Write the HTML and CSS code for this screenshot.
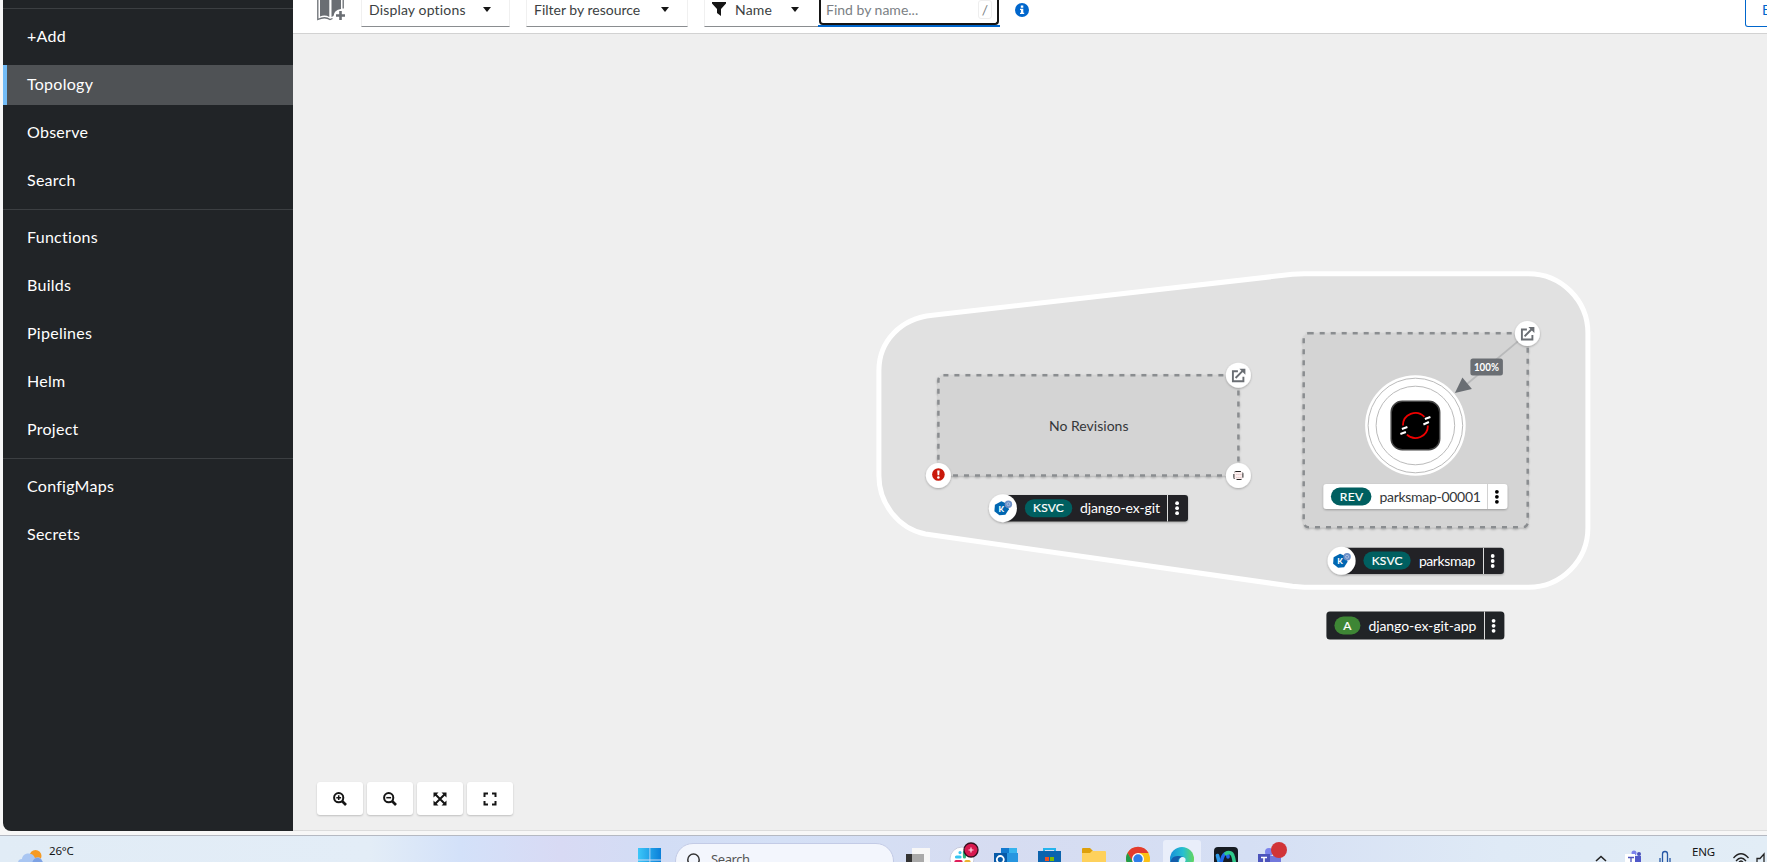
FILE: index.html
```
<!DOCTYPE html>
<html lang="en">
<head>
<meta charset="utf-8">
<title>Topology</title>
<link rel="stylesheet" href="styles.css">
</head>
<body>
<div class="browser">
  <nav class="sidebar">
    <ul class="nav-group"><li class="nav-item">+Add</li><li class="nav-item active">Topology</li><li class="nav-item">Observe</li><li class="nav-item">Search</li></ul>
    <ul class="nav-group"><li class="nav-item">Functions</li><li class="nav-item">Builds</li><li class="nav-item">Pipelines</li><li class="nav-item">Helm</li><li class="nav-item">Project</li></ul>
    <ul class="nav-group"><li class="nav-item">ConfigMaps</li><li class="nav-item">Secrets</li></ul>
  </nav>
  <main class="main">
    <header class="toolbar">
      <svg class="catalog" width="30" height="22" viewBox="0 0 30 22">
        <path fill="#6a6e73" d="M3 0H12.300V17Q8 14.500 3 16.500ZM14.500 0H24V9Q17 10 16.500 16L14.500 17Z"/>
        <path fill="none" stroke="#6a6e73" stroke-width="1.300" d="M.8 0V19.500Q8 16 13 19.500L15.500 18.500M26.200 0V8.500"/>
        <path stroke="#6a6e73" stroke-width="2.600" d="M19 15.500H28M23.500 11V20"/>
      </svg>
      <div class="select display"><span>Display options</span><i class="caret"></i></div>
      <div class="select filter"><span>Filter by resource</span><i class="caret"></i></div>
      <div class="select name"><svg width="14" height="14" viewBox="0 0 14 14"><path d="M0 0H14V1.500L9 7V14L5 11V7L0 1.500Z" fill="#151515"/></svg><span>Name</span><i class="caret"></i></div>
      <div class="search"><div class="search-box"><span>Find by name...</span><kbd>/</kbd></div></div>
      <svg class="info" width="14" height="14" viewBox="0 0 14 14"><circle cx="7" cy="7" r="7" fill="#06c"/><path fill="#fff" d="M5.800 2.500H8.300V4.700H5.800ZM5 5.700H8.300V9.700H9.200V11H5V9.700H5.900V7H5Z"/></svg>
      <div class="export">E</div>
    </header>
    <section class="canvas">
      <svg class="graph" width="1474" height="797" viewBox="292.6 33.5 1474 797">
        <defs>
          <filter id="sh" x="-30%" y="-30%" width="160%" height="160%"><feDropShadow dx="0" dy="1" stdDeviation="1.200" flood-color="#000" flood-opacity=".28"/></filter>
          <g id="open"><circle r="12.500" fill="#fff" filter="url(#sh)"/><path d="M-.5-4H-5.500V6H5V1.500M-2.800 2.800L5-5" fill="none" stroke="#6a6e73" stroke-width="1.900"/><path d="M1-6.500H7V-.5Z" fill="#6a6e73"/></g>
          <g id="dots"><circle cy="-5" r="1.900"/><circle r="1.900"/><circle cy="5" r="1.900"/></g>
          <g id="knative"><circle r="14" fill="#fff" filter="url(#sh)"/><path d="M-1.500-7L4-4.500 6 1 2.500 6.500-3.500 7-8.500 3-8-3.500Z" fill="#0066b1"/><circle cx="5.500" cy="-4" r="3.700" fill="#6c8fc7"/><circle cx="5.500" cy="-4" r="1.500" fill="none" stroke="#b9c9e6" stroke-width=".8"/><text x="-4.300" y="3.300" class="kmark">K</text></g>
        </defs>
        <path d="M878.500 370C878.500 341 900 318 932 314.800L1292 273.800Q1298 273.200 1304 273.200H1528A59.500 59.500 0 0 1 1587.500 332.700V527A59.500 59.500 0 0 1 1528 586.700H1304Q1298 586.500 1292 585.800L925 533.500C898 528 878.500 503 878.500 475Z" fill="#e1e1e1" stroke="#fff" stroke-width="5"/>
        <rect x="938" y="374.700" width="300" height="100.300" rx="5" class="zone" filter="url(#sh)"/>
        <rect x="1303.300" y="332.800" width="224" height="194" rx="5" class="zone" filter="url(#sh)"/>
        <text x="1048.600" y="430.500" textLength="79.500" class="light">No Revisions</text>
        <use href="#open" x="1238" y="374.700"/>
        <g transform="translate(938 475)"><circle r="12.500" fill="#fff" filter="url(#sh)"/><circle cy="-1" r="6.300" fill="#c9190b"/><path d="M-1.200-5H1.200L.8-.2H-.8Z" fill="#fff"/><circle cy="2" r="1.300" fill="#fff"/></g>
        <g transform="translate(1238 475)"><circle r="12.500" fill="#fff" filter="url(#sh)"/><rect x="-4.500" y="-4" width="9" height="8" rx="2" fill="#fbeeee" stroke="#222" stroke-width="1" stroke-dasharray="5 2"/><path d="M-2-1H3M-2 2H3" stroke="#dbb" stroke-dasharray="1 1"/></g>

        <g filter="url(#sh)"><rect x="1003" y="494.500" width="184.600" height="26.500" rx="3" fill="#212427"/></g>
        <use href="#knative" x="1002.500" y="507.700"/>
        <rect x="1024.500" y="498.700" width="47.300" height="18" rx="9" fill="#005f60"/>
        <text x="1032.600" y="511.500" textLength="30.800" class="badge">KSVC</text>
        <text x="1079.600" y="512.500" textLength="80" class="label">django-ex-git</text>
        <path d="M1167.100 494.500V521" stroke="#ddd"/><use href="#dots" x="1176.700" y="507.700" fill="#fff"/>

        <path d="M1527 333L1466 384" stroke="#b8b9ba" stroke-width="1.700"/>
        <path d="M1454.500 392.500L1462 377 1471.500 388.500Z" fill="#6a6e73"/>
        <use href="#open" x="1527" y="333"/>
        <rect x="1470" y="358" width="32.500" height="17" rx="2.500" fill="#6a6e73"/>
        <text x="1473.500" y="370.500" textLength="25" lengthAdjust="spacingAndGlyphs" class="percent">100%</text>
        <circle cx="1415" cy="425" r="50.300" fill="#fff"/><circle cx="1415" cy="425" r="47.300" class="ring"/><circle cx="1415" cy="425" r="39.300" class="ring"/>
        <rect x="1390.800" y="400.800" width="48.500" height="48.500" rx="11" fill="#000" stroke="#434343" stroke-width="1.500"/>
        <path d="M1402.500 425A12.500 12.500 0 0 1 1424 416.300M1427.500 425A12.500 12.500 0 0 1 1406.500 434.200" fill="none" stroke="#e00" stroke-width="1.800"/>
        <path d="M1424.500 418.500L1430 416.500M1423 424L1428.500 421.500M1401.500 428.500L1407 426.500M1400 433.500L1405.500 431.500" stroke="#fff" stroke-width="2"/>
        <g filter="url(#sh)"><rect x="1323" y="483.500" width="184" height="25" rx="3" fill="#fff"/></g>
        <rect x="1330.500" y="487" width="40.500" height="18" rx="9" fill="#005f60"/>
        <text x="1339.300" y="500" textLength="23.500" class="badge">REV</text>
        <text x="1379" y="501" textLength="101.500" class="light">parksmap-00001</text>
        <path d="M1487.100 483.500V508.500" stroke="#d2d2d2"/><use href="#dots" x="1496.500" y="496.300"/>

        <g filter="url(#sh)"><rect x="1341" y="547.200" width="162.500" height="26.200" rx="3" fill="#212427"/></g>
        <use href="#knative" x="1341.200" y="560.300"/>
        <rect x="1363" y="551" width="47.300" height="18" rx="9" fill="#005f60"/>
        <text x="1371.300" y="564" textLength="30.800" class="badge">KSVC</text>
        <text x="1418.500" y="565" textLength="56.500" class="label">parksmap</text>
        <path d="M1483.100 547.300V573.500" stroke="#ddd"/><use href="#dots" x="1492.300" y="560.500" fill="#fff"/>

        <rect x="1326" y="611" width="178" height="28" rx="3.500" fill="#212427"/>
        <rect x="1334" y="616" width="26" height="18" rx="9" fill="#3e8635"/>
        <text x="1347" y="629" text-anchor="middle" class="badge">A</text>
        <text x="1368" y="630" textLength="108" class="label">django-ex-git-app</text>
        <path d="M1484.100 611V639" stroke="#ddd"/><use href="#dots" x="1493.200" y="625.300" fill="#fff"/>
      </svg>
      <div class="controls">
        <button class="control"><svg width="14" height="14" viewBox="0 0 14 14"><circle cx="5.700" cy="5.700" r="4.600"/><path d="M9 9L13 13" stroke-width="2.600"/><path d="M3.300 5.700H8.100M5.700 3.300V8.100" stroke-width="1.500"/></svg></button>
        <button class="control"><svg width="14" height="14" viewBox="0 0 14 14"><circle cx="5.700" cy="5.700" r="4.600"/><path d="M9 9L13 13" stroke-width="2.600"/><path d="M3.300 5.700H8.100" stroke-width="1.500"/></svg></button>
        <button class="control"><svg width="14" height="14" viewBox="0 0 14 14"><path d="M2 2L12 12M12 2L2 12"/><path fill="#151515" stroke="none" d="M.5.5H5.500L.5 5.500ZM13.500.5V5.500L8.500.5ZM.5 13.500V8.500L5.500 13.500ZM13.500 13.500H8.500L13.500 8.500Z"/></svg></button>
        <button class="control"><svg width="14" height="14" viewBox="0 0 14 14"><path d="M1.500 5V1.500H5M9 1.500H12.500V5M12.500 9V12.500H9M5 12.500H1.500V9"/></svg></button>
      </div>
    </section>
  </main>
</div>
<footer class="taskbar">
  <div class="weather">
    <svg width="26" height="26" viewBox="18 836 26 26"><circle cx="35.500" cy="856" r="6" fill="#f59a23"/><path d="M18 863Q18 859 22 859C23 852 33 852 35 858Q41 855 43 863Z" fill="#a9c6f2"/><path d="M32 863Q34 857 39 858Q42 859 43 863" fill="#7da2e4"/></svg>
    <span>26°C</span>
  </div>
  <div class="apps">
    <div class="app"><svg width="44" height="26" viewBox="628 836 44 26"><defs><linearGradient id="win"><stop stop-color="#3cc7f9"/><stop offset="1" stop-color="#0a7fd9"/></linearGradient></defs><path fill="url(#win)" d="M638 848H649.500V859.500H638ZM650.300 848H661V859.500H650.300ZM638 860.500H649.500V862H638ZM650.300 860.500H661V862H650.300Z"/></svg></div>
    <div class="task-search"><svg width="16" height="16" viewBox="0 0 16 16"><circle cx="8.500" cy="6.700" r="5.700" fill="none" stroke="#333" stroke-width="1.500"/><path d="M4.500 10.700L1 15" stroke="#333" stroke-width="1.600"/></svg><span>Search</span></div>
    <div class="app"><svg width="44" height="26" viewBox="896 836 44 26"><path fill="#f7f7f7" d="M912 848H930V862H912Z"/><path fill="#333" d="M906 854H924V862H906Z"/><path fill="#aaa" d="M912 854H924V862H912Z"/></svg></div>
    <div class="app"><svg width="44" height="26" viewBox="940 836 44 26"><circle cx="962" cy="859" r="12" fill="#fff" stroke="#c8cbdc"/><g stroke-width="3.200" stroke-linecap="round"><path d="M960 852.500V852.600M956.500 857H960" stroke="#36c5f0"/><path d="M964.500 852V857" stroke="#2eb67d"/><path d="M956 861.500H961" stroke="#e01e5a"/><path d="M966 861.500H969" stroke="#ecb22e"/></g><circle cx="971" cy="850" r="7" fill="#d8194f" stroke="#35101f" stroke-width="1.300"/><path d="M968.500 850H973.500M971 847.500V852.500" stroke="#ffd6e2" stroke-width="1.200"/></svg></div>
    <div class="app"><svg width="44" height="26" viewBox="984 836 44 26"><path fill="#1279cf" d="M1001 848H1017V862H1001Z"/><path fill="#37b4ee" d="M1009 848H1017V853H1009Z"/><path fill="#2796e0" d="M1001 853H1018V862H1001Z"/><path fill="#075aa8" d="M994 853H1007V862H994Z"/><circle cx="1000.300" cy="859.500" r="3.500" fill="none" stroke="#fff" stroke-width="1.800"/></svg></div>
    <div class="app"><svg width="44" height="26" viewBox="1028 836 44 26"><path fill="none" stroke="#24b4ed" stroke-width="2" d="M1044 852V849H1055V852"/><path fill="#0b63ad" d="M1038 851H1061V862H1038Z"/><path fill="#f25022" d="M1045 857H1049V861H1045Z"/><path fill="#7fba00" d="M1050 857H1054V861H1050Z"/></svg></div>
    <div class="app"><svg width="44" height="26" viewBox="1072 836 44 26"><path fill="#dea00b" d="M1082 849Q1082 848 1083 848H1090L1093 851V862H1082Z"/><path fill="#fed15c" d="M1082 853H1090L1092 851H1105Q1106 851 1106 852V862H1082Z"/></svg></div>
    <div class="app"><svg width="44" height="26" viewBox="1116 836 44 26"><circle cx="1138" cy="859" r="12" fill="#fbc116"/><path fill="#e33b2e" d="M1127.500 853A12 12 0 0 1 1148.500 853H1138L1132.500 862Z"/><path fill="#229b4b" d="M1127.500 853L1133 862H1126.500Q1125 857 1127.500 853Z"/><circle cx="1138" cy="859" r="6" fill="#fff"/><circle cx="1138" cy="859" r="4.700" fill="#2f7de9"/></svg></div>
    <div class="app"><svg width="44" height="26" viewBox="1160 836 44 26"><defs><linearGradient id="edge"><stop stop-color="#1690d8"/><stop offset=".55" stop-color="#27bfd0"/><stop offset="1" stop-color="#62d65b"/></linearGradient></defs><rect x="1163" y="840" width="38" height="36" rx="3" fill="#e9eefa"/><circle cx="1182" cy="859" r="12" fill="url(#edge)"/><path fill="#135dab" d="M1170.300 862Q1172 855 1179 856L1184 857Q1178 857 1178 862Z"/><path d="M1179 862Q1179 857 1183 857Q1187 858 1185 862Z" fill="#e7f5ff"/></svg></div>
    <div class="app"><svg width="44" height="26" viewBox="1204 836 44 26"><rect x="1214" y="847" width="24" height="24" rx="4" fill="#161b22"/><g fill="none" stroke-width="3.600" stroke-linecap="round"><path stroke="#2f9bea" d="M1217.500 855.500Q1219 862 1220 864"/><path stroke="#2168ed" d="M1220 864C1222 862 1222 853.500 1226 853.500Q1228 853.500 1228 857"/><path stroke="#2fc98a" d="M1226 853.500C1228 852 1232 852 1233 856Q1234 859 1234.500 864"/></g></svg></div>
    <div class="app"><svg width="44" height="26" viewBox="1248 836 44 26"><circle cx="1269" cy="852" r="4" fill="#7b83eb"/><path fill="#7278dc" d="M1262 856H1281V862H1262Z"/><path fill="#4b53bc" d="M1258 854H1270V862H1258Z"/><path d="M1261 857.500H1267M1264 857.500V862" stroke="#fff" stroke-width="1.600"/><circle cx="1279" cy="850" r="8" fill="#d13438"/></svg></div>
  </div>
  <div class="tray">
    <svg width="90" height="26" viewBox="1590 836 90 26"><path d="M1596 861L1601 856.500 1606 861" fill="none" stroke="#222" stroke-width="1.600"/><circle cx="1634" cy="853" r="2.500" fill="#7b83eb"/><circle cx="1639" cy="854" r="2" fill="#4b53bc"/><path fill="#5059c9" d="M1630 856H1641V862H1630Z"/><path fill="#fff" d="M1625 854H1635V862H1625Z"/><path d="M1628 857.500H1634M1631 857.500V862" stroke="#4b53bc" stroke-width="1.300"/><path d="M1662.500 862V854Q1662.500 851.500 1665 851.500T1667.500 854V862M1660 858V862M1670 858V862" fill="none" stroke="#2657a5" stroke-width="1.300"/></svg>
    <span>ENG</span>
    <svg width="40" height="26" viewBox="1727 836 40 26"><path d="M1733.500 858Q1741 849.500 1748.500 858M1736 861Q1741 855 1746 861M1738.500 863Q1741 859 1743.500 863M1757 862V858.500H1760L1764 854V862" fill="none" stroke="#222" stroke-width="1.300"/></svg>
  </div>
</footer>
</body>
</html>
```
FILE: styles.css
```
* { box-sizing: border-box; }
body { margin: 0; width: 1767px; height: 862px; overflow: hidden; display: flex; flex-direction: column; background: #f7f7f7; font-family: Lato, "Open Sans", sans-serif; color: #151515; }
.browser { height: 835px; padding: 0 0 4px 3px; display: flex; flex: none; }
.sidebar { width: 290px; height: 831px; padding-top: 8px; flex: none; background: #212427; border-radius: 0 0 0 8px; }
.nav-group { margin: 0; padding: 8px 0; list-style: none; border-top: 1px solid #3c3f42; display: flex; flex-direction: column; gap: 8px; }
.nav-item { height: 40px; padding-left: 24px; line-height: 37px; font-size: 16px; letter-spacing: .27px; color: #fff; }
.nav-item.active { background: #4f5255; border-left: 4px solid #73bcf7; padding-left: 20px; }
.main { flex: 1; min-width: 0; display: flex; flex-direction: column; }
.toolbar { height: 34px; flex: none; background: #fff; border-bottom: 1px solid #d2d2d2; display: flex; align-items: flex-start; padding-left: 24px; overflow: hidden; }
.catalog { margin-right: 14px; }
.select { height: 27px; padding: 0 0 8px 7px; display: flex; align-items: center; border: solid #f0f0f0; border-width: 0 1px; border-bottom: 1px solid #8a8d90; font-size: 14px; color: #3c3f42; white-space: nowrap; letter-spacing: .16px; }
.select span { line-height: 19px; }
.caret { width: 0; height: 0; border: 4.500px solid transparent; border-top: 5px solid #151515; border-bottom: 0; margin-left: auto; margin-right: 18px; }
.display { width: 149px; margin-right: 16px; }
.filter { width: 162px; margin-right: 16px; letter-spacing: 0; }
.name { width: 114px; gap: 9px; border-right: 0; }
.name .caret { margin-right: 19px; }
.search { width: 182px; height: 27px; border-bottom: 2px solid #06c; padding-left: 1px; padding-right: 1px; }
.search-box { height: 25px; border: 2px solid #151515; border-top: 0; border-radius: 0 0 4px 4px; padding: 0 5px 4px; display: flex; justify-content: space-between; align-items: center; color: #7b7f84; font-size: 14px; letter-spacing: 0; }
.search-box kbd { width: 14px; height: 19px; border: 1px solid #eee; border-radius: 3px; font: 14px/17px Lato, sans-serif; text-align: center; }
.info { margin: 3px 0 0 15px; }
.export { width: 60px; height: 27px; margin-left: auto; margin-right: -38px; padding-left: 16px; border: 1px solid #06c; border-top: 0; border-radius: 0 0 3px 3px; font-size: 14px; line-height: 19px; color: #06c; }
.canvas { height: 797px; position: relative; background: #efefef; border-bottom: 1px solid #dcdcdc; }
.graph { display: block; height: 797px; }
.zone { fill: #d4d4d4; stroke: #8a8d90; stroke-width: 2.500px; stroke-dasharray: 5 6; }
.light { font-size: 14px; fill: #34373a; }
.label { font-size: 14px; fill: #fff; }
.badge { font-size: 12px; fill: #fff; stroke: #fff; stroke-width: .2px; }
.percent { font-size: 11px; font-weight: 700; fill: #fff; }
.kmark { font-size: 8px; font-weight: 900; fill: #fff; }
.ring { fill: none; stroke: #bbb; stroke-width: 1px; }
.controls { position: absolute; left: 24px; bottom: 15px; display: flex; gap: 4px; }
.control { width: 46px; height: 33px; padding: 0; border: 0; border-radius: 3px; background: #fff; box-shadow: 0 1px 2px #0003; display: flex; align-items: center; justify-content: center; }
.control svg { fill: none; stroke: #151515; stroke-width: 2; }
.taskbar { height: 27px; flex: none; border-top: 1px solid #b5b9c2; display: flex; overflow: hidden; font-family: "Noto Sans", sans-serif; background: linear-gradient(90deg, #e1ecf6 0, #e3edf7 370px, #d3e1f9 460px, #d8daf4 560px, #d2ddf5 660px, #d4e0f6 780px, #d6dcf1 1000px, #d5dff4 1250px, #dfeaf6 1500px, #e2edf6 1767px); }
.weather { width: 628px; padding-left: 18px; display: flex; gap: 5px; }
.weather span, .tray span { font-size: 11.500px; line-height: 15px; padding-top: 7px; letter-spacing: -.2px; }
.tray span { padding-top: 8px; }
.apps { display: flex; flex: none; }
.app { width: 44px; height: 26px; }
.app svg, .weather svg, .tray svg { display: block; flex: none; }
.task-search { width: 219px; height: 36px; margin: 7px 2px 0 3px; padding: 9px 0 0 9px; border: 1px solid #c3cbe6; border-radius: 18px; background: #f3f6fd; display: flex; gap: 10px; font-size: 13px; line-height: 13px; color: #555; }
.task-search span { letter-spacing: -.4px; }
.tray { margin-left: auto; display: flex; }
.tray span { width: 47px; padding-left: 12px; }
```
